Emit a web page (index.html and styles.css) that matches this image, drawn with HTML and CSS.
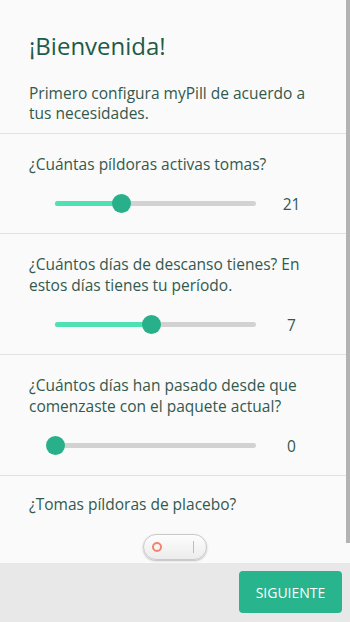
FILE: index.html
```html
<!DOCTYPE html>
<html>
  <head>
    <meta charset="UTF-8">
    <title>myPill</title>
    <link rel="stylesheet" href="styles.css">
  </head>
  <body>
    <div class="screen">
      <div class="content">
        <div class="intro">
          <h1>¡Bienvenida!</h1>
          <p>Primero configura myPill de acuerdo a tus necesidades.</p>
        </div>

        <div class="section">
          <p class="question">¿Cuántas píldoras activas tomas?</p>
          <div class="slider-row">
            <div class="track">
              <div class="fill" style="width: 33%"></div>
              <div class="thumb" style="left: 33%"></div>
            </div>
            <span class="value">21</span>
          </div>
        </div>

        <div class="section">
          <p class="question">¿Cuántos días de descanso tienes? En estos días tienes tu período.</p>
          <div class="slider-row">
            <div class="track">
              <div class="fill" style="width: 48%"></div>
              <div class="thumb" style="left: 48%"></div>
            </div>
            <span class="value">7</span>
          </div>
        </div>

        <div class="section">
          <p class="question">¿Cuántos días han pasado desde que comenzaste con el paquete actual?</p>
          <div class="slider-row">
            <div class="track">
              <div class="fill" style="width: 0%"></div>
              <div class="thumb" style="left: 0%"></div>
            </div>
            <span class="value">0</span>
          </div>
        </div>

        <div class="section last">
          <p class="question">¿Tomas píldoras de placebo?</p>
          <div class="toggle-row">
            <div class="toggle">
              <span class="toggle-off"></span>
              <span class="toggle-on"></span>
            </div>
          </div>
        </div>

        <!-- overlay scrollbar -->
        <div class="scrollbar"></div>
      </div>

      <div class="footer">
        <button class="next">SIGUIENTE</button>
      </div>
    </div>
  </body>
</html>
```

FILE: styles.css
```css
body {
  margin: 0;
  background-color: #fafafa;
  color: #32594d;
  font-family: 'Open Sans', 'Noto Sans', sans-serif;
}

.screen {
  display: flex;
  flex-direction: column;
  height: 622px;
  width: 350px;
}

.content {
  position: relative;
  flex: 1;
  overflow: hidden;
  background-color: #fafafa;
}

.scrollbar {
  position: absolute;
  top: 0;
  right: 0;
  width: 4px;
  height: 543px;
  background-color: #b3b3b3;
}

/* Intro */
.intro {
  padding: 30px 29px 10px 29px;
}

h1 {
  margin: 0 0 21px 0;
  font-size: 24px;
  line-height: 32px;
  font-weight: normal;
  color: #1f5b48;
}

.intro p {
  margin: 0;
  font-size: 15.5px;
  line-height: 20px;
}

/* Question sections */
.section {
  border-top: 1px solid #e2e2e2;
  margin-right: 4px;
  padding: 20px 0 18px 29px;
}

.section.last {
  padding-top: 18px;
}

.question {
  margin: 0;
  font-size: 15.5px;
  line-height: 21px;
  padding-right: 10px;
}

.slider-row {
  display: flex;
  align-items: center;
  height: 24px;
  margin-top: 16px;
  padding-left: 26px;
}

.track {
  position: relative;
  width: 201px;
  height: 5px;
  border-radius: 3px;
  background-color: #d2d2d2;
}

.fill {
  height: 100%;
  border-radius: 3px;
  background-color: #4fe1b3;
}

.thumb {
  position: absolute;
  top: 50%;
  width: 19px;
  height: 19px;
  margin: -9.5px 0 0 -9.5px;
  border-radius: 50%;
  background-color: #27b08a;
}

.value {
  width: 71px;
  text-align: center;
  font-size: 15.5px;
  line-height: 24px;
  padding-top: 2px;
}

/* Toggle */
.toggle-row {
  display: flex;
  justify-content: center;
  margin-top: 19px;
  padding-right: 25px;
}

.toggle {
  display: flex;
  align-items: center;
  justify-content: space-between;
  box-sizing: border-box;
  width: 64px;
  height: 26px;
  padding: 0 12px 0 8px;
  border: 1px solid #c9c9c9;
  border-radius: 13px;
  background: linear-gradient(#fdfdfd, #ececec);
  box-shadow: 0 1px 2px rgba(0, 0, 0, 0.25);
}

.toggle-off {
  width: 6px;
  height: 6px;
  border: 2px solid #f3826f;
  border-radius: 50%;
}

.toggle-on {
  width: 1px;
  height: 12px;
  background-color: #bdbdbd;
}

/* Footer */
.footer {
  display: flex;
  justify-content: flex-end;
  align-items: center;
  height: 59px;
  padding-right: 8px;
  background-color: #e8e8e8;
}

.next {
  width: 103px;
  height: 42px;
  border: none;
  border-radius: 4px;
  background-color: #28b48c;
  color: #ffffff;
  font-family: 'Open Sans', 'Noto Sans', sans-serif;
  font-size: 14px;
  padding: 0;
  margin-top: -1px;
}
```
